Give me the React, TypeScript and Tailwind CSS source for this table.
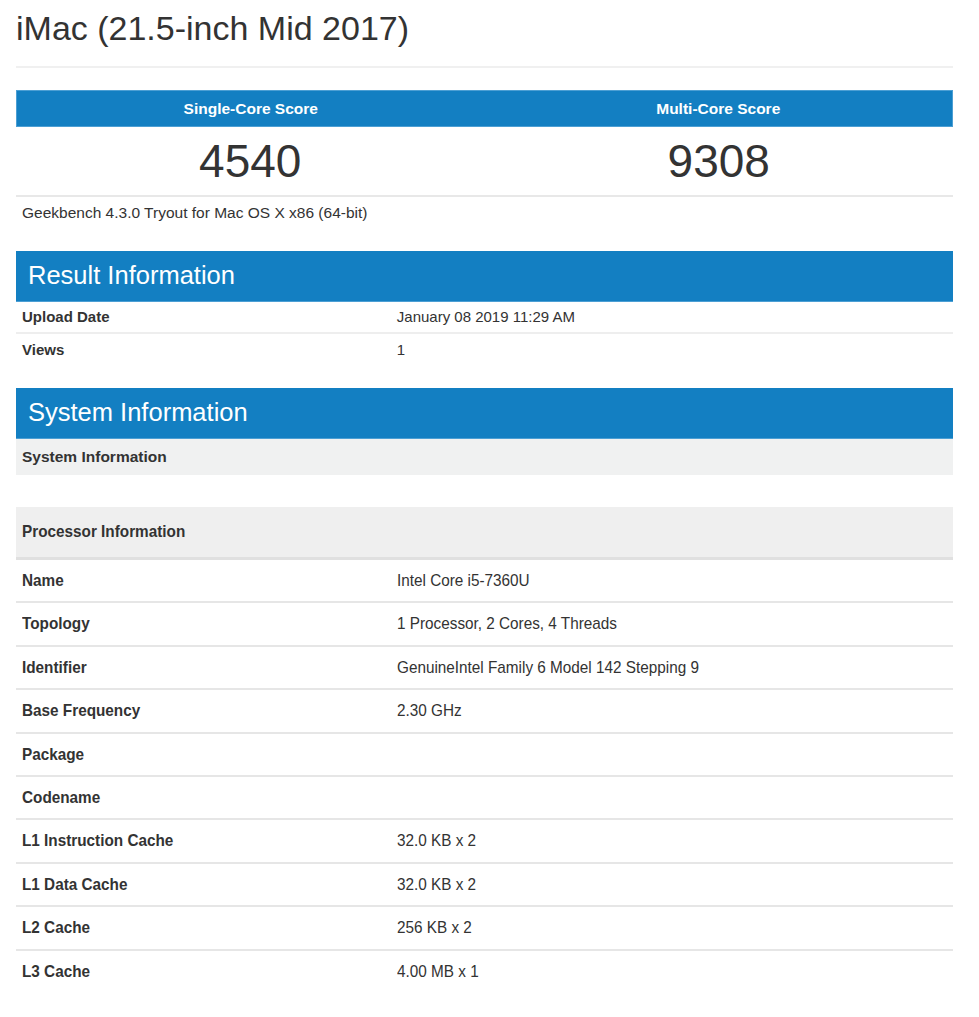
const procRows: [string, string][] = [
  ["Name", "Intel Core i5-7360U"],
  ["Topology", "1 Processor, 2 Cores, 4 Threads"],
  ["Identifier", "GenuineIntel Family 6 Model 142 Stepping 9"],
  ["Base Frequency", "2.30 GHz"],
  ["Package", ""],
  ["Codename", ""],
  ["L1 Instruction Cache", "32.0 KB x 2"],
  ["L1 Data Cache", "32.0 KB x 2"],
  ["L2 Cache", "256 KB x 2"],
  ["L3 Cache", "4.00 MB x 1"],
];

function SectionBar({ title }: { title: string }) {
  return (
    <div className="h-[51px] bg-[#137fc2] border-b border-[#4c9fd4] flex items-center pl-3">
      <h2 className="text-[25.5px] text-white leading-none">{title}</h2>
    </div>
  );
}

export default function App() {
  return (
    <div
      className="min-h-[1017px] bg-white text-[#333]"
      style={{ fontFamily: '"Liberation Sans", Arial, sans-serif' }}
    >
      <div className="ml-4 w-[937px]">
        <div className="pt-2 pb-[18px] border-b-2 border-[#f0f0f0]">
          <h1 className="text-[34px] leading-[40px] text-[#333]">iMac (21.5-inch Mid 2017)</h1>
        </div>

        {/* scores */}
        <div className="mt-[22px]">
          <div className="grid grid-cols-2 h-[37px] bg-[#137fc2] border border-[#4c9fd4]">
            <div className="flex items-center justify-center text-white font-bold text-[15.5px]">
              Single-Core Score
            </div>
            <div className="flex items-center justify-center text-white font-bold text-[15.5px]">
              Multi-Core Score
            </div>
          </div>
          <div className="grid grid-cols-2 h-[70px] border-b-2 border-[#e8e8e8]">
            <div className="flex items-center justify-center text-[46px] text-[#333]">4540</div>
            <div className="flex items-center justify-center text-[46px] text-[#333]">9308</div>
          </div>
          <div className="h-[32px] flex items-center px-[6px] text-[15.5px] text-[#333]">
            Geekbench 4.3.0 Tryout for Mac OS X x86 (64-bit)
          </div>
        </div>

        {/* result information */}
        <div className="mt-[22px]">
          <SectionBar title="Result Information" />
          <div className="grid grid-cols-[40%_60%] h-[32px] items-center border-b-2 border-[#eee] text-[15px]">
            <div className="pl-[6px] font-bold">Upload Date</div>
            <div className="pl-[6px]">January 08 2019 11:29 AM</div>
          </div>
          <div className="grid grid-cols-[40%_60%] h-[32px] items-center text-[15px]">
            <div className="pl-[6px] font-bold">Views</div>
            <div className="pl-[6px]">1</div>
          </div>
        </div>

        {/* system information */}
        <div className="mt-[22px]">
          <SectionBar title="System Information" />
          <div className="h-[36px] bg-[#f0f1f1] flex items-center pl-[6px] text-[15.5px] font-bold">
            System Information
          </div>
        </div>

        {/* processor information */}
        <div className="mt-[32px]">
          <div className="h-[53px] bg-[#efefef] border-b-[3px] border-[#e0e0e0] flex items-center pl-[6px]">
            <span className="inline-block origin-left scale-x-90 text-[17px] font-bold text-[#333]">
              Processor Information
            </span>
          </div>
          {procRows.map(([label, value], i) => (
            <div
              key={label}
              className={`grid grid-cols-[40%_60%] h-[43.4px] items-center text-[17px] ${
                i < procRows.length - 1 ? "border-b-2 border-[#e6e6e6]" : ""
              }`}
            >
              <div className="pl-[6px]">
                <span className="inline-block origin-left scale-x-90 font-bold">{label}</span>
              </div>
              <div className="pl-[6px]">
                <span className="inline-block origin-left scale-x-90">{value}</span>
              </div>
            </div>
          ))}
        </div>
      </div>
    </div>
  );
}
